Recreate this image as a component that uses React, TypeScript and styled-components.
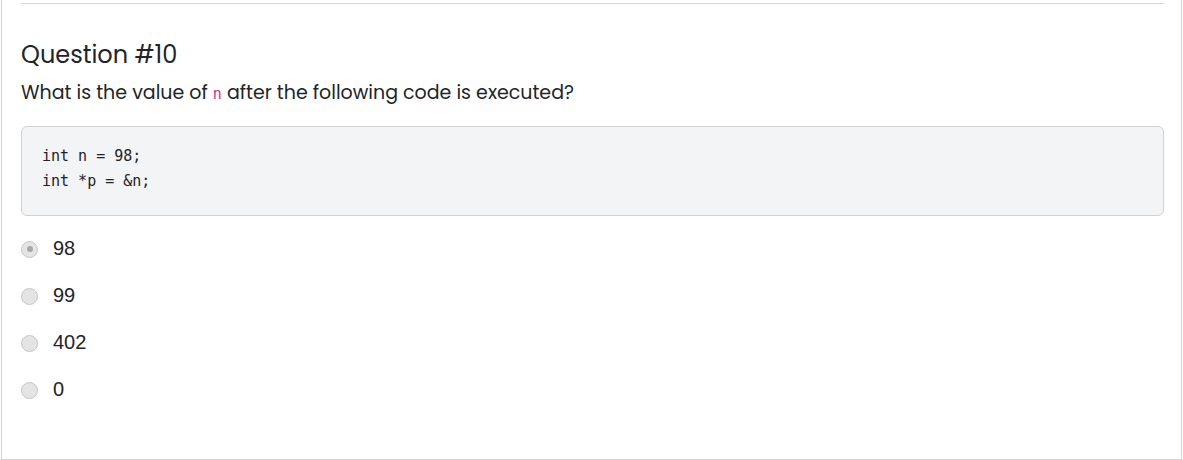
import React from "react";
import styled, { createGlobalStyle } from "styled-components";

const Global = createGlobalStyle`
  html, body { margin: 0; padding: 0; background: #fff; }
  body { font-family: "Poppins", "Noto Sans", sans-serif; color: #212529; }
`;

const Card = styled.div`
  margin: -20px 0 0 1px;
  width: 1181px;
  height: 480px;
  box-sizing: border-box;
  border: 1px solid #d4d4d4;
  border-top: none;
  padding: 23px 17px 0 19px;
`;

const Rule = styled.hr`
  margin: 0;
  border: none;
  border-top: 1px solid #d6d6d6;
`;

const Title = styled.h3`
  margin: 36px 0 0;
  font-size: 24px;
  font-weight: 400;
  line-height: 30px;
  color: #212529;
`;

const Prompt = styled.p`
  margin: 10px 0 0;
  font-size: 19px;
  line-height: 26px;
  color: #212529;
`;

const InlineCode = styled.code`
  font-family: "DejaVu Sans Mono", monospace;
  font-size: 15px;
  color: #d63384;
`;

const CodeBox = styled.pre`
  margin: 19px 0 0;
  height: 90px;
  box-sizing: border-box;
  background: #f3f4f6;
  border: 1px solid #cfd1d4;
  border-radius: 6px;
  padding: 17px 20px;
  font-family: "DejaVu Sans Mono", monospace;
  font-size: 15px;
  line-height: 25px;
  color: #1f2328;
`;

const Options = styled.div`
  margin-top: 21px;
  display: flex;
  flex-direction: column;
  gap: 25px;
`;

const Option = styled.label`
  display: flex;
  align-items: center;
  gap: 15px;
  height: 22px;
  font-family: "Liberation Sans", Arial, sans-serif;
  font-size: 20px;
  color: #212529;
`;

const Radio = styled.span<{ $checked?: boolean }>`
  position: relative;
  flex: none;
  width: 17px;
  height: 17px;
  margin-top: 2px;
  border-radius: 50%;
  background: #e4e4e4;
  border: 1px solid #c6c6c6;
  box-sizing: border-box;
  &::after {
    content: "";
    display: ${(p) => (p.$checked ? "block" : "none")};
    position: absolute;
    left: 4.5px;
    top: 4.5px;
    width: 6px;
    height: 6px;
    border-radius: 50%;
    background: #a8a8a8;
  }
`;

const answers = ["98", "99", "402", "0"];

export default function App() {
  return (
    <>
      <Global />
      <Card>
        <Rule />
        <Title>Question #10</Title>
        <Prompt>
          What is the value of <InlineCode>n</InlineCode> after the following code is executed?
        </Prompt>
        <CodeBox>{"int n = 98;\nint *p = &n;"}</CodeBox>
        <Options>
          {answers.map((a, i) => (
            <Option key={a}>
              <Radio $checked={i === 0} />
              {a}
            </Option>
          ))}
        </Options>
      </Card>
    </>
  );
}
